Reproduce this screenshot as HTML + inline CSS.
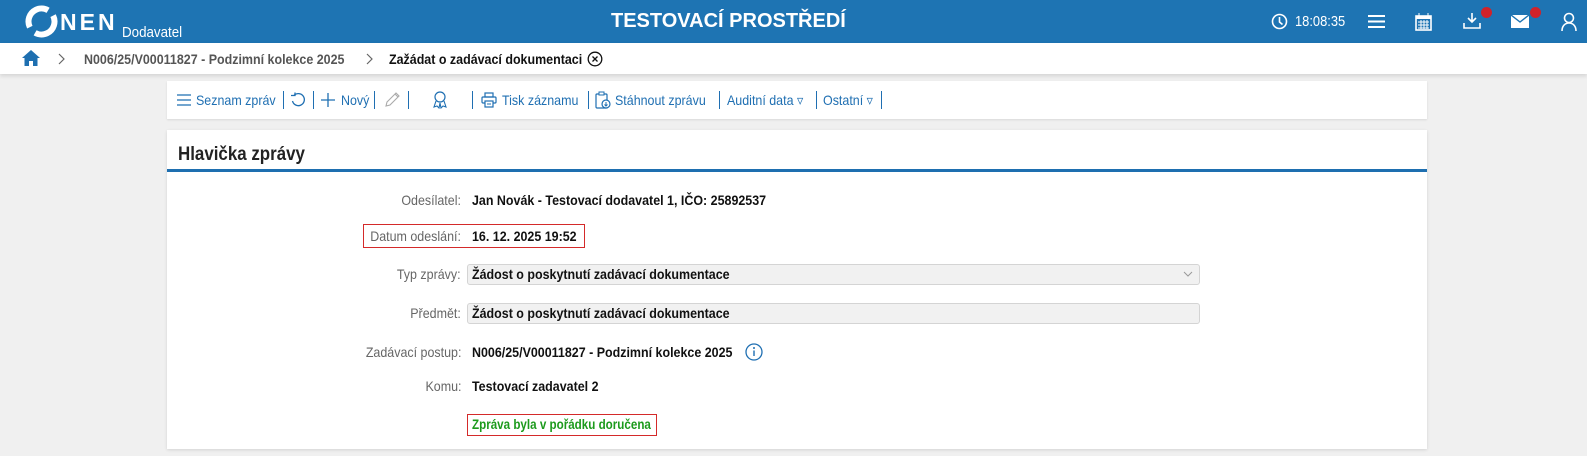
<!DOCTYPE html>
<html><head><meta charset="utf-8"><style>
*{margin:0;padding:0;box-sizing:border-box}
body{width:1587px;height:456px;overflow:hidden;background:#f0f0f0;font-family:"Liberation Sans",sans-serif;position:relative}
.a{position:absolute;white-space:nowrap}
.t{transform:scaleX(.89);transform-origin:left center}
.hdr{position:absolute;left:0;top:0;width:1587px;height:43px;background:#1e74b3}
.bc{position:absolute;left:0;top:43px;width:1587px;height:31px;background:#fff;box-shadow:0 2px 4px rgba(0,0,0,.12)}
.tb{position:absolute;left:167px;top:81px;width:1260px;height:38px;background:#fff;box-shadow:0 1px 2px rgba(0,0,0,.1)}
.card{position:absolute;left:167px;top:130px;width:1260px;height:319px;background:#fff;box-shadow:0 1px 3px rgba(0,0,0,.12)}
.tbi{color:#1f6fb2;font-size:14px;top:92px;transform:scaleX(.89);transform-origin:left center}
.sep{position:absolute;top:91px;width:1px;height:18px;background:#1f6fb2}
.lbl{color:#666;font-size:14px;text-align:right;right:1126px;transform:scaleX(.89);transform-origin:right center}
.val{color:#111;font-size:14px;font-weight:bold;left:472px;transform:scaleX(.89);transform-origin:left center}
.box{position:absolute;left:467px;width:733px;height:21px;background:#f1f1f1;border:1px solid #d4d4d4;border-radius:3px}
</style></head><body>
<div class="hdr"></div>
<svg class="a" style="left:25px;top:5px" width="33" height="33" viewBox="0 0 33 33"><circle cx="16.5" cy="16.5" r="13" fill="none" stroke="#fff" stroke-width="6" stroke-dasharray="33 7.8" transform="rotate(-27 16.5 16.5)"/></svg>
<div class="a" style="left:60px;top:9px;color:#fff;font-weight:bold;font-size:23px;letter-spacing:3px">NEN</div>
<div class="a t" style="left:122px;top:24px;color:#fff;font-size:15px">Dodavatel</div>
<div class="a" style="left:611px;top:10px;color:#fff;font-weight:bold;font-size:20px">TESTOVACÍ PROSTŘEDÍ</div>
<svg class="a" style="left:1271px;top:13px" width="17" height="17" viewBox="0 0 17 17"><circle cx="8.5" cy="8.5" r="7" fill="none" stroke="#fff" stroke-width="1.6"/><path d="M8.5 4v5l3 2.5" fill="none" stroke="#fff" stroke-width="1.6"/></svg>
<div class="a" style="left:1295px;top:13px;color:#fff;font-size:15px;transform:scaleX(.86);transform-origin:left">18:08:35</div>
<svg class="a" style="left:1368px;top:14px" width="17" height="15"><path d="M0 2h17M0 7.5h17M0 13h17" stroke="#fff" stroke-width="2"/></svg>
<svg class="a" style="left:1415px;top:13px" width="17" height="18" viewBox="0 0 17 18"><rect x="1" y="3" width="15" height="14" fill="none" stroke="#fff" stroke-width="1.6"/><rect x="1" y="3" width="15" height="3" fill="#fff"/><path d="M4 0v4M13 0v4M3 9h11M3 12h11M3 15h11M6 7v9M9 7v9M12 7v9" stroke="#fff"/></svg>
<svg class="a" style="left:1463px;top:12px" width="18" height="18" viewBox="0 0 18 18"><path d="M9 1v9M5 6l4 4 4-4M1 11v5h16v-5" fill="none" stroke="#fff" stroke-width="1.6"/></svg>
<div class="a" style="left:1481px;top:7px;width:11px;height:11px;border-radius:50%;background:#d0222a"></div>
<svg class="a" style="left:1511px;top:15px" width="18" height="13" viewBox="0 0 18 13"><rect width="18" height="13" fill="#fff"/><path d="M0 0l9 7 9-7" fill="none" stroke="#1e74b3" stroke-width="1.4"/></svg>
<div class="a" style="left:1530px;top:7px;width:11px;height:11px;border-radius:50%;background:#d0222a"></div>
<svg class="a" style="left:1561px;top:12px" width="16" height="19" viewBox="0 0 16 19"><circle cx="8" cy="6" r="4.5" fill="none" stroke="#fff" stroke-width="1.6"/><path d="M1 19c0-5 3-8 7-8s7 3 7 8" fill="none" stroke="#fff" stroke-width="1.6"/></svg>
<div class="bc"></div>
<svg class="a" style="left:22px;top:50px" width="18" height="16" viewBox="0 0 18 16"><path d="M9 0L0 8h2.5v8h4.5v-5h4v5h4.5v-8H18z" fill="#1e6fb0"/></svg>
<svg class="a" style="left:58px;top:53px" width="8" height="12"><path d="M1 1l5 5-5 5" fill="none" stroke="#666" stroke-width="1.2"/></svg>
<div class="a t" style="left:84px;top:51px;color:#555;font-weight:bold;font-size:14px">N006/25/V00011827 - Podzimní kolekce 2025</div>
<svg class="a" style="left:366px;top:53px" width="8" height="12"><path d="M1 1l5 5-5 5" fill="none" stroke="#666" stroke-width="1.2"/></svg>
<div class="a t" style="left:389px;top:51px;color:#111;font-weight:bold;font-size:14px">Zažádat o zadávací dokumentaci</div>
<svg class="a" style="left:587px;top:51px" width="16" height="16" viewBox="0 0 16 16"><circle cx="8" cy="8" r="6.8" fill="none" stroke="#111" stroke-width="1.3"/><path d="M5.5 5.5l5 5M10.5 5.5l-5 5" stroke="#111" stroke-width="1.3"/></svg>
<div class="tb"></div>
<svg class="a" style="left:177px;top:94px" width="14" height="12"><path d="M0 1h14M0 6h14M0 11h14" stroke="#1f6fb2" stroke-width="1.3"/></svg>
<div class="a tbi" style="left:196px">Seznam zpráv</div><div class="sep" style="left:283px"></div>
<svg class="a" style="left:290px;top:92px" width="16" height="16" viewBox="0 0 16 16"><path d="M4 3.5A6 6 0 1 1 2.5 9" fill="none" stroke="#1f6fb2" stroke-width="1.3"/><path d="M1 3.5h4v-3" fill="none" stroke="#1f6fb2" stroke-width="1.3"/></svg>
<div class="sep" style="left:313px"></div>
<svg class="a" style="left:321px;top:93px" width="14" height="14"><path d="M7 0v14M0 7h14" stroke="#1f6fb2" stroke-width="1.3"/></svg>
<div class="a tbi" style="left:341px">Nový</div><div class="sep" style="left:374px"></div>
<svg class="a" style="left:384px;top:91px" width="17" height="17" viewBox="0 0 17 17"><path d="M2 15l1-4 9-9 3 3-9 9z M11 3l3 3" fill="none" stroke="#aaa" stroke-width="1.1"/></svg>
<div class="sep" style="left:408px"></div>
<svg class="a" style="left:432px;top:91px" width="16" height="18" viewBox="0 0 16 18"><circle cx="8" cy="6" r="5" fill="none" stroke="#1f6fb2" stroke-width="1.2"/><path d="M4 10l-2 6 3-1 2 2 1-5M12 10l2 6-3-1-2 2-1-5" fill="none" stroke="#1f6fb2" stroke-width="1.1"/></svg>
<div class="sep" style="left:472px"></div>
<svg class="a" style="left:481px;top:92px" width="16" height="16" viewBox="0 0 16 16"><rect x="4" y="1" width="8" height="4" fill="none" stroke="#1f6fb2" stroke-width="1.2"/><rect x="1" y="5" width="14" height="6" rx="1" fill="none" stroke="#1f6fb2" stroke-width="1.2"/><rect x="4" y="9" width="8" height="6" fill="#fff" stroke="#1f6fb2" stroke-width="1.2"/><path d="M6 12h4" stroke="#1f6fb2"/></svg>
<div class="a tbi" style="left:502px">Tisk záznamu</div><div class="sep" style="left:588px"></div>
<svg class="a" style="left:595px;top:91px" width="16" height="18" viewBox="0 0 16 18"><rect x="1" y="3" width="11" height="14" rx="1" fill="none" stroke="#1f6fb2" stroke-width="1.2"/><rect x="4" y="1" width="5" height="3" fill="#fff" stroke="#1f6fb2"/><circle cx="11" cy="13" r="4" fill="#fff" stroke="#1f6fb2" stroke-width="1.2"/><path d="M11 11v4M9.5 13.5l1.5 1.5 1.5-1.5" fill="none" stroke="#1f6fb2"/></svg>
<div class="a tbi" style="left:615px">Stáhnout zprávu</div><div class="sep" style="left:719px"></div>
<div class="a tbi" style="left:727px">Auditní data ▿</div><div class="sep" style="left:816px"></div>
<div class="a tbi" style="left:823px">Ostatní ▿</div><div class="sep" style="left:881px"></div>
<div class="card"></div>
<div class="a t" style="left:178px;top:144px;color:#222;font-weight:bold;font-size:19px">Hlavička zprávy</div>
<div class="a" style="left:167px;top:169px;width:1260px;height:3px;background:#1e6fb0"></div>
<div class="a lbl" style="top:192px">Odesílatel:</div>
<div class="a val" style="top:192px">Jan Novák - Testovací dodavatel 1, IČO: 25892537</div>
<div class="a" style="left:363px;top:224px;width:222px;height:24px;border:1px solid #d42a2a"></div>
<div class="a lbl" style="top:228px">Datum odeslání:</div>
<div class="a val" style="top:228px">16. 12. 2025 19:52</div>
<div class="a lbl" style="top:266px">Typ zprávy:</div>
<div class="box" style="top:264px"></div>
<div class="a val" style="top:266px">Žádost o poskytnutí zadávací dokumentace</div>
<svg class="a" style="left:1183px;top:271px" width="10" height="7"><path d="M1 1l4 4 4-4" fill="none" stroke="#999"/></svg>
<div class="a lbl" style="top:305px">Předmět:</div>
<div class="box" style="top:303px"></div>
<div class="a val" style="top:305px">Žádost o poskytnutí zadávací dokumentace</div>
<div class="a lbl" style="top:344px">Zadávací postup:</div>
<div class="a val" style="top:344px">N006/25/V00011827 - Podzimní kolekce 2025</div>
<svg class="a" style="left:745px;top:343px" width="18" height="18" viewBox="0 0 18 18"><circle cx="9" cy="9" r="8" fill="none" stroke="#1f6fb2" stroke-width="1.3"/><path d="M9 7.5v5.5" stroke="#1f6fb2" stroke-width="1.4"/><circle cx="9" cy="5" r="1" fill="#1f6fb2"/></svg>
<div class="a lbl" style="top:378px">Komu:</div>
<div class="a val" style="top:378px">Testovací zadavatel 2</div>
<div class="a" style="left:467px;top:414px;width:190px;height:22px;border:1px solid #d42a2a"></div>
<div class="a" style="left:472px;top:416px;color:#1c9a1c;font-weight:bold;font-size:14px;transform:scaleX(.83);transform-origin:left center">Zpráva byla v pořádku doručena</div>
</body></html>
